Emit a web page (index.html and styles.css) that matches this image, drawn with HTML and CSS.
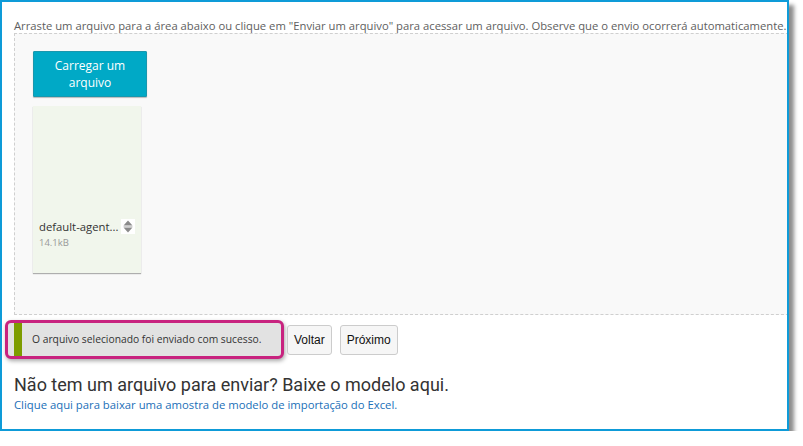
FILE: index.html
```html
<!DOCTYPE html>
<html lang="pt-BR">
<head>
    <meta charset="UTF-8">
    <meta name="viewport" content="width=device-width, initial-scale=1.0">
    <title>Importar arquivo</title>
    <link rel="stylesheet" href="styles.css">
</head>
<body>
    <div class="frame">
        <div class="content">
            <p class="hint">Arraste um arquivo para a área abaixo ou clique em "Enviar um arquivo" para acessar um arquivo. Observe que o envio ocorrerá automaticamente.</p>

            <div class="dropzone">
                <button class="upload-btn">Carregar um<br>arquivo</button>
                <div class="file-card">
                    <div class="file-row">
                        <span class="file-name">default-agent...</span>
                        <span class="sort-icon">
                            <svg width="14" height="15" viewBox="0 0 14 15">
                                <path d="M7 1.5 L11.5 6.5 L2.5 6.5 Z" fill="#8a8a8a"/>
                                <path d="M2.5 7.5 H11.5" stroke="#d0d0d0" stroke-width="1"/>
                                <path d="M2.5 8.5 L11.5 8.5 L7 13.5 Z" fill="#8a8a8a"/>
                            </svg>
                        </span>
                    </div>
                    <div class="file-size">14.1kB</div>
                </div>
            </div>

            <div class="actions">
                <div class="highlight">
                    <div class="status">O arquivo selecionado foi enviado com sucesso.</div>
                </div>
                <button class="btn">Voltar</button>
                <button class="btn">Próximo</button>
            </div>

            <h3 class="template-title">Não tem um arquivo para enviar? Baixe o modelo aqui.</h3>
            <a class="template-link" href="#">Clique aqui para baixar uma amostra de modelo de importação do Excel.</a>
        </div>
    </div>
</body>
</html>
```

FILE: styles.css
```css
body {
    margin: 0;
    background: #fff;
    font-family: "Open Sans", Arial, sans-serif;
}
.frame {
    box-sizing: border-box;
    width: 789px;
    height: 431px;
    border: 2px solid #0e9bd8;
    background: #fff;
    box-shadow: 5px 5px 4px rgba(0, 0, 0, 0.45);
    overflow: hidden;
}
.content {
    padding: 0 0 0 12px;
}
.hint {
    margin: 0;
    padding-top: 16px;
    height: 15px;
    line-height: 15px;
    font-size: 11.25px;
    color: #5e5e5e;
    white-space: nowrap;
}
.dropzone {
    box-sizing: border-box;
    width: 800px;
    height: 282px;
    border: 1px dashed #cfcfcf;
    background: #f9f9f9;
    padding: 17px 0 0 18px;
}
.upload-btn {
    display: block;
    width: 114px;
    height: 46px;
    padding: 0;
    background: #00a9c6;
    border: 1px solid #1a97ad;
    border-radius: 1px;
    box-shadow: 0 1px 1px rgba(0, 0, 0, 0.25);
    color: #fff;
    font-family: "Open Sans", Arial, sans-serif;
    font-size: 12px;
    line-height: 17px;
    cursor: pointer;
}
.file-card {
    box-sizing: border-box;
    width: 108px;
    height: 167px;
    margin-top: 9px;
    background: #f1f6ec;
    box-shadow: 0 1px 1px rgba(0, 0, 0, 0.3);
    padding: 113px 6px 0 6px;
}
.file-row {
    display: flex;
    align-items: center;
    gap: 3px;
}
.file-name {
    font-size: 11.3px;
    color: #333;
    white-space: nowrap;
}
.sort-icon {
    display: flex;
    background: #fff;
}
.file-size {
    margin-top: 2px;
    font-size: 9.5px;
    color: #999;
}
.actions {
    display: flex;
    align-items: center;
    margin: 5px 0 0 -9px;
}
.highlight {
    display: flex;
    border: 3px solid #c8237f;
    border-radius: 6px;
    background: #e2e2e2;
    padding-left: 6px;
    box-shadow: 1px 2px 4px rgba(0, 0, 0, 0.35);
}
.status {
    box-sizing: border-box;
    height: 33px;
    width: 267px;
    border-left: 8px solid #7d9c00;
    padding-left: 10px;
    line-height: 32px;
    font-size: 10.3px;
    color: #333;
    white-space: nowrap;
}
.btn {
    height: 30px;
    margin-left: 8px;
    padding: 0 6px;
    background: #f6f6f6;
    border: 1px solid #ccc;
    border-radius: 3px;
    font-family: "Liberation Sans", Arial, sans-serif;
    font-size: 12px;
    color: #111;
    cursor: pointer;
}
.highlight + .btn {
    margin-left: 3px;
}
.template-title {
    margin: 15px 0 0;
    font-family: Roboto, Arial, sans-serif;
    font-weight: 400;
    font-size: 18px;
    line-height: 22px;
    color: #333;
}
.template-link {
    display: block;
    margin-top: 1px;
    font-size: 11.3px;
    line-height: 16px;
    color: #1a6fb8;
    text-decoration: none;
}
```
